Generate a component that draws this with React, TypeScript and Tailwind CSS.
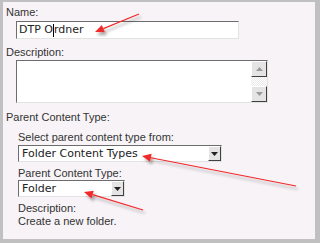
import React from "react";

const label = "text-[11px] leading-[13px] text-[#333] [font-family:'Liberation_Sans',Arial,sans-serif]";
const field = "[font-family:'DejaVu_Sans',Verdana,sans-serif] text-[11px] text-[#222]";

const DropButton: React.FC = () => (
  <div className="flex h-full w-[13px] items-center justify-center border border-t-white border-l-white border-r-[#404040] border-b-[#404040] bg-[#e4e4e4]">
    <svg width="7" height="4" viewBox="0 0 7 4">
      <path d="M0 0h7L3.5 4z" fill="#222" />
    </svg>
  </div>
);

const Arrow: React.FC<{ x1: number; y1: number; x2: number; y2: number }> = ({ x1, y1, x2, y2 }) => {
  const a = Math.atan2(y2 - y1, x2 - x1);
  const l = 9;
  const w = 4;
  const bx = x2 - Math.cos(a) * l;
  const by = y2 - Math.sin(a) * l;
  const p1 = `${bx + Math.sin(a) * w},${by - Math.cos(a) * w}`;
  const p2 = `${bx - Math.sin(a) * w},${by + Math.cos(a) * w}`;
  return (
    <g>
      <line x1={x1} y1={y1} x2={bx} y2={by} stroke="#f02a2a" strokeWidth="1.2" />
      <polygon points={`${x2},${y2} ${p1} ${p2}`} fill="#f02a2a" />
    </g>
  );
};

const App: React.FC = () => {
  return (
    <div className="relative h-[243px] w-[320px] overflow-hidden border-t-2 border-l-[3px] border-r-[5px] border-b-4 border-[#c0c0c0] bg-[#f7f3f7]">
      <div className="flex flex-col pl-[3px] pt-[4px]">
        <div className={label}>Name:</div>
        <div className="ml-[10px] mt-[2px] flex h-[18px] w-[223px] items-center border border-t-[#6d6d6d] border-l-[#6d6d6d] border-r-[#e3e3e3] border-b-[#e3e3e3] bg-white pl-[2px]">
          <span className={field}>DTP O</span>
          <span className="h-[13px] w-px bg-black" />
          <span className={field}>rdner</span>
        </div>

        <div className={`${label} mt-[7px]`}>Description:</div>
        <div className="ml-[10px] mt-[1px] flex h-[43px] w-[252px] border border-t-[#6d6d6d] border-l-[#6d6d6d] border-r-[#e3e3e3] border-b-[#e3e3e3] bg-white">
          <div className="flex-1" />
          <div className="flex w-[16px] flex-col">
            <div className="flex h-[16px] items-center justify-center border border-t-white border-l-white border-r-[#404040] border-b-[#404040] bg-[#e4e4e4]">
              <svg width="7" height="4" viewBox="0 0 7 4">
                <path d="M3.5 0L7 4H0z" fill="#9a9a9a" />
              </svg>
            </div>
            <div className="flex-1 bg-[repeating-conic-gradient(#e8e8e8_0_25%,#ffffff_0_50%)] bg-[length:2px_2px]" />
            <div className="flex h-[16px] items-center justify-center border border-t-white border-l-white border-r-[#404040] border-b-[#404040] bg-[#e4e4e4]">
              <svg width="7" height="4" viewBox="0 0 7 4">
                <path d="M0 0h7L3.5 4z" fill="#9a9a9a" />
              </svg>
            </div>
          </div>
        </div>

        <div className={`${label} mt-[8px]`}>Parent Content Type:</div>

        <div className="ml-[12px] mt-[7px] flex flex-col">
          <div className={label}>Select parent content type from:</div>
          <div className="mt-[1px] flex h-[17px] w-[204px] border border-t-[#6d6d6d] border-l-[#6d6d6d] border-r-[#e3e3e3] border-b-[#e3e3e3] bg-white">
            <div className={`${field} flex-1 pl-[3px] leading-[15px]`}>Folder Content Types</div>
            <DropButton />
          </div>

          <div className={`${label} mt-[5px]`}>Parent Content Type:</div>
          <div className="mt-[0px] flex h-[17px] w-[107px] border border-t-[#6d6d6d] border-l-[#6d6d6d] border-r-[#e3e3e3] border-b-[#e3e3e3] bg-white">
            <div className={`${field} flex-1 pl-[3px] leading-[15px]`}>Folder</div>
            <DropButton />
          </div>

          <div className={`${label} mt-[5px]`}>Description:</div>
          <div className={label}>Create a new folder.</div>
        </div>
      </div>

      {/* annotation arrows */}
      <svg className="pointer-events-none absolute -left-[3px] -top-[2px]" width="320" height="243">
        <defs>
          <filter id="sh" x="-20%" y="-50%" width="140%" height="200%">
            <feGaussianBlur in="SourceAlpha" stdDeviation="1.5" />
            <feOffset dx="2" dy="3" result="b" />
            <feComponentTransfer>
              <feFuncA type="linear" slope="0.35" />
            </feComponentTransfer>
            <feMerge>
              <feMergeNode />
              <feMergeNode in="SourceGraphic" />
            </feMerge>
          </filter>
        </defs>
        <g filter="url(#sh)">
          <Arrow x1={139} y1={14} x2={95} y2={32} />
          <Arrow x1={296} y1={186} x2={142} y2={156} />
          <Arrow x1={143} y1={210} x2={84} y2={192} />
        </g>
      </svg>
    </div>
  );
};

export default App;
